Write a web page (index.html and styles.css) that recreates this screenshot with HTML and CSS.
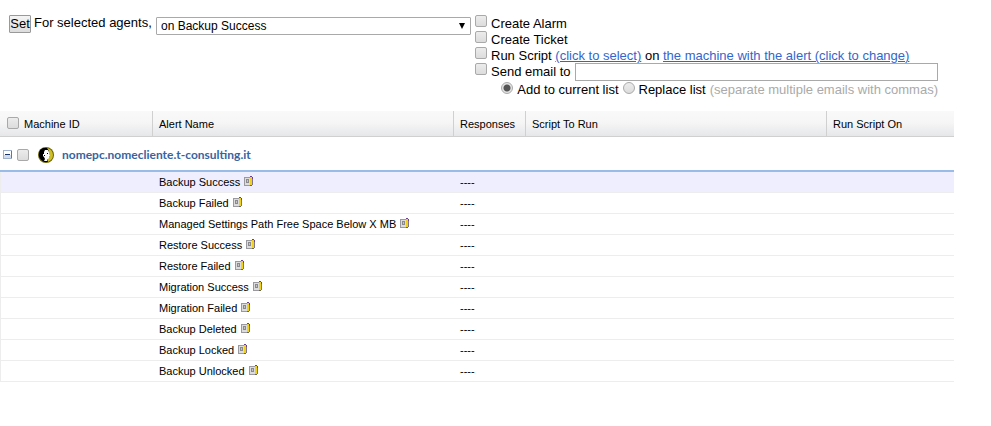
FILE: index.html
```
<!DOCTYPE html>
<html lang="en">
<head>
    <meta charset="UTF-8">
    <meta name="viewport" content="width=device-width, initial-scale=1.0">
    <title>Backup Alerts</title>
    <link rel="stylesheet" href="styles.css">
</head>
<body>
    <svg class="symbols" aria-hidden="true">
        <symbol id="edit-icon" viewBox="0 0 9 11">
            <path fill="#9a9a9e" d="M0 1h6v9H0z"/>
            <path fill="#dcdcdc" d="M1 2h5v7H1z"/>
            <path fill="#8a8a8e" d="M2 3h3v4H2z"/>
            <path fill="#c4c4c4" d="M3 4h1v2H3z"/>
            <path fill="#6b3f96" d="M6 0h2v1H6zM8 1h1v2H8z"/>
            <path fill="#7d7490" d="M8 3h1v6H8z"/>
            <path fill="#f0d21e" d="M6 1h2v8H6z"/>
            <path fill="#6d6648" d="M6 9h2v1H6z"/>
        </symbol>
    </svg>

    <form class="alert-form">
        <button type="button" class="set-button">Set</button>
        <label class="agents-label" for="alert-type">For selected agents,</label>
        <div class="select-box">
            <select id="alert-type">
                <option>on Backup Success</option>
                <option>on Backup Failed</option>
                <option>on Restore Success</option>
                <option>on Restore Failed</option>
            </select>
        </div>
        <div class="options">
            <div class="option">
                <input type="checkbox" id="create-alarm">
                <label for="create-alarm">Create Alarm</label>
            </div>
            <div class="option">
                <input type="checkbox" id="create-ticket">
                <label for="create-ticket">Create Ticket</label>
            </div>
            <div class="option">
                <input type="checkbox" id="run-script">
                <span><label for="run-script">Run Script</label> <a href="#">(click to select)</a> on <a href="#">the machine with the alert (click to change)</a></span>
            </div>
            <div class="option">
                <input type="checkbox" id="send-email">
                <label for="send-email">Send email to</label>
                <input type="text" class="email" aria-label="Email addresses">
            </div>
            <div class="list-mode">
                <input type="radio" name="mode" id="add-list" checked>
                <label for="add-list">Add to current list</label>
                <input type="radio" name="mode" id="replace-list">
                <label for="replace-list">Replace list</label>
                <span class="hint">(separate multiple emails with commas)</span>
            </div>
        </div>
    </form>

    <table class="alerts">
        <colgroup>
            <col class="col-machine">
            <col class="col-alert">
            <col class="col-responses">
            <col class="col-script">
            <col>
        </colgroup>
        <thead>
            <tr>
                <th>
                    <div class="select-all">
                        <input type="checkbox" id="all-machines">
                        <label for="all-machines">Machine ID</label>
                    </div>
                </th>
                <th>Alert Name</th>
                <th>Responses</th>
                <th>Script To Run</th>
                <th>Run Script On</th>
            </tr>
        </thead>
        <tbody>
            <tr class="group">
                <td colspan="5">
                    <div class="machine">
                        <button type="button" class="toggle" aria-label="Collapse">
                            <svg width="9" height="9" viewBox="0 0 9 9" shape-rendering="crispEdges">
                                <path fill="#9fb0cc" d="M0 0h9v9H0z"/>
                                <path fill="#fff" d="M1 1h7v4H1z"/>
                                <path fill="#d3dcea" d="M1 5h7v3H1z"/>
                                <path fill="#16346e" d="M2 4h5v1H2z"/>
                                <path fill="#5f759f" d="M1 8h8V1H8v7H1z"/>
                            </svg>
                        </button>
                        <input type="checkbox" id="machine-1">
                        <svg class="agent" width="16" height="16" viewBox="0 0 16 16">
                            <circle cx="8" cy="8" r="8" fill="#6b6400"/>
                            <circle cx="8" cy="8" r="7" fill="#cfc02a"/>
                            <path fill="#000" d="M9 1H5L2 3 1 6v4l2 3 3 2h4l-1-3 2-2V4z"/>
                            <path fill="#fff" d="M7 3h3l1 2v2l1 2h-1v2l-1 1H9v2H6l1-2-1-2-1-1V7h1V5z"/>
                            <path fill="#000" d="M9 6h1v1H9zM6 8h1v1H6z"/>
                        </svg>
                        <label for="machine-1">nomepc.nomecliente.t-consulting.it</label>
                    </div>
                </td>
            </tr>
            <tr class="selected"><td></td><td>Backup Success <svg class="edit"><use href="#edit-icon"/></svg></td><td>----</td><td></td><td></td></tr>
            <tr><td></td><td>Backup Failed <svg class="edit"><use href="#edit-icon"/></svg></td><td>----</td><td></td><td></td></tr>
            <tr><td></td><td>Managed Settings Path Free Space Below X MB <svg class="edit"><use href="#edit-icon"/></svg></td><td>----</td><td></td><td></td></tr>
            <tr><td></td><td>Restore Success <svg class="edit"><use href="#edit-icon"/></svg></td><td>----</td><td></td><td></td></tr>
            <tr><td></td><td>Restore Failed <svg class="edit"><use href="#edit-icon"/></svg></td><td>----</td><td></td><td></td></tr>
            <tr><td></td><td>Migration Success <svg class="edit"><use href="#edit-icon"/></svg></td><td>----</td><td></td><td></td></tr>
            <tr><td></td><td>Migration Failed <svg class="edit"><use href="#edit-icon"/></svg></td><td>----</td><td></td><td></td></tr>
            <tr><td></td><td>Backup Deleted <svg class="edit"><use href="#edit-icon"/></svg></td><td>----</td><td></td><td></td></tr>
            <tr><td></td><td>Backup Locked <svg class="edit"><use href="#edit-icon"/></svg></td><td>----</td><td></td><td></td></tr>
            <tr><td></td><td>Backup Unlocked <svg class="edit"><use href="#edit-icon"/></svg></td><td>----</td><td></td><td></td></tr>
        </tbody>
    </table>
</body>
</html>
```
FILE: styles.css
```
* {
    box-sizing: border-box;
}

body {
    margin: 0 37px 0 0;
    background: #fff;
    color: #000;
    font-family: "Liberation Sans", Arial, sans-serif;
    font-size: 13px;
    line-height: 16px;
}

.symbols {
    display: none;
}

a {
    color: #3366cc;
}

input[type="checkbox"],
input[type="radio"] {
    appearance: none;
    flex: none;
    width: 12px;
    height: 12px;
    margin: 0;
    border: 1px solid #a9a9a9;
    border-radius: 2px;
    background: linear-gradient(#ececec, #dcdcdc);
}

input[type="radio"] {
    border-radius: 50%;
}

input[type="radio"]:checked {
    background: radial-gradient(circle, #555 0 3px, #e4e4e4 4px);
}

/* top form */
.alert-form {
    display: flex;
    align-items: flex-start;
    padding: 15px 16px 13px 9px;
}

.set-button {
    width: 22px;
    height: 18px;
    margin-right: 3px;
    padding: 0;
    border: 1px solid #999;
    border-radius: 1px;
    background: linear-gradient(#f4f4f4, #dcdcdc);
    color: #000;
    font: 13px/16px "Liberation Sans", Arial, sans-serif;
}

.agents-label {
    width: 122px;
    white-space: nowrap;
}

.select-box {
    position: relative;
    width: 315px;
    margin: 2px 4px 0 0;
}

.select-box::after {
    content: "";
    position: absolute;
    top: 6px;
    right: 6px;
    border: 3px solid transparent;
    border-top: 6px solid #000;
    border-bottom: 0;
    pointer-events: none;
}

.select-box select {
    appearance: none;
    display: block;
    width: 100%;
    height: 18px;
    padding: 0 20px 0 4px;
    border: 1px solid #a9a9a9;
    border-radius: 1px;
    background: #fff;
    color: #000;
    font: 12px/16px "Liberation Sans", Arial, sans-serif;
}

.options {
    flex: 1;
}

.option {
    display: flex;
    height: 16px;
    gap: 4px;
}

.option label,
.option span {
    white-space: nowrap;
}

.option input[type="checkbox"] + * {
    padding-top: 1px;
}

.email {
    flex: 1;
    min-width: 0;
    height: 18px;
    padding: 0 3px;
    border: 1px solid #a9a9a9;
    font: 13px/16px "Liberation Sans", Arial, sans-serif;
}

.list-mode {
    display: flex;
    justify-content: flex-end;
    gap: 4px;
    padding-top: 3px;
    white-space: nowrap;
}

.hint {
    color: #aaa;
}

/* alerts table */
.alerts {
    width: 100%;
    border-collapse: separate;
    border-spacing: 0;
    table-layout: fixed;
    font-size: 11px;
    line-height: 14px;
}

.col-machine {
    width: 153px;
}

.col-alert,
.col-script {
    width: 301px;
}

.col-responses {
    width: 72px;
}

.alerts th {
    height: 26px;
    padding: 0 6px;
    border-right: 1px solid #d0d0d0;
    border-bottom: 1px solid #d0d0d0;
    background: linear-gradient(#f9f9f9, #f6f6f6 45%, #e6e7e9);
    font-weight: normal;
    text-align: left;
}

.alerts th:last-child {
    border-right: 0;
}

.select-all {
    display: flex;
    gap: 5px;
    padding-left: 1px;
}

.alerts td {
    height: 21px;
    padding: 0 6px;
    border-bottom: 1px solid #ededed;
}

.alerts td:first-child {
    border-left: 1px solid #ededed;
}

.alerts .group td {
    height: 35px;
    padding: 2px 3px 0;
    border-left: 0;
    border-bottom: 2px solid #99bbe8;
}

.machine {
    display: flex;
    align-items: center;
    color: #3764a0;
    font: bold 12px/16px Lato, sans-serif;
}

.toggle {
    display: flex;
    margin-right: 5px;
    padding: 0;
    border: 0;
    background: none;
}

.agent {
    margin: 0 8px 0 9px;
}

.selected td {
    background: #eeeeff;
}

.edit {
    width: 9px;
    height: 11px;
    margin-left: 1px;
    vertical-align: -1px;
    shape-rendering: crispEdges;
}
```
